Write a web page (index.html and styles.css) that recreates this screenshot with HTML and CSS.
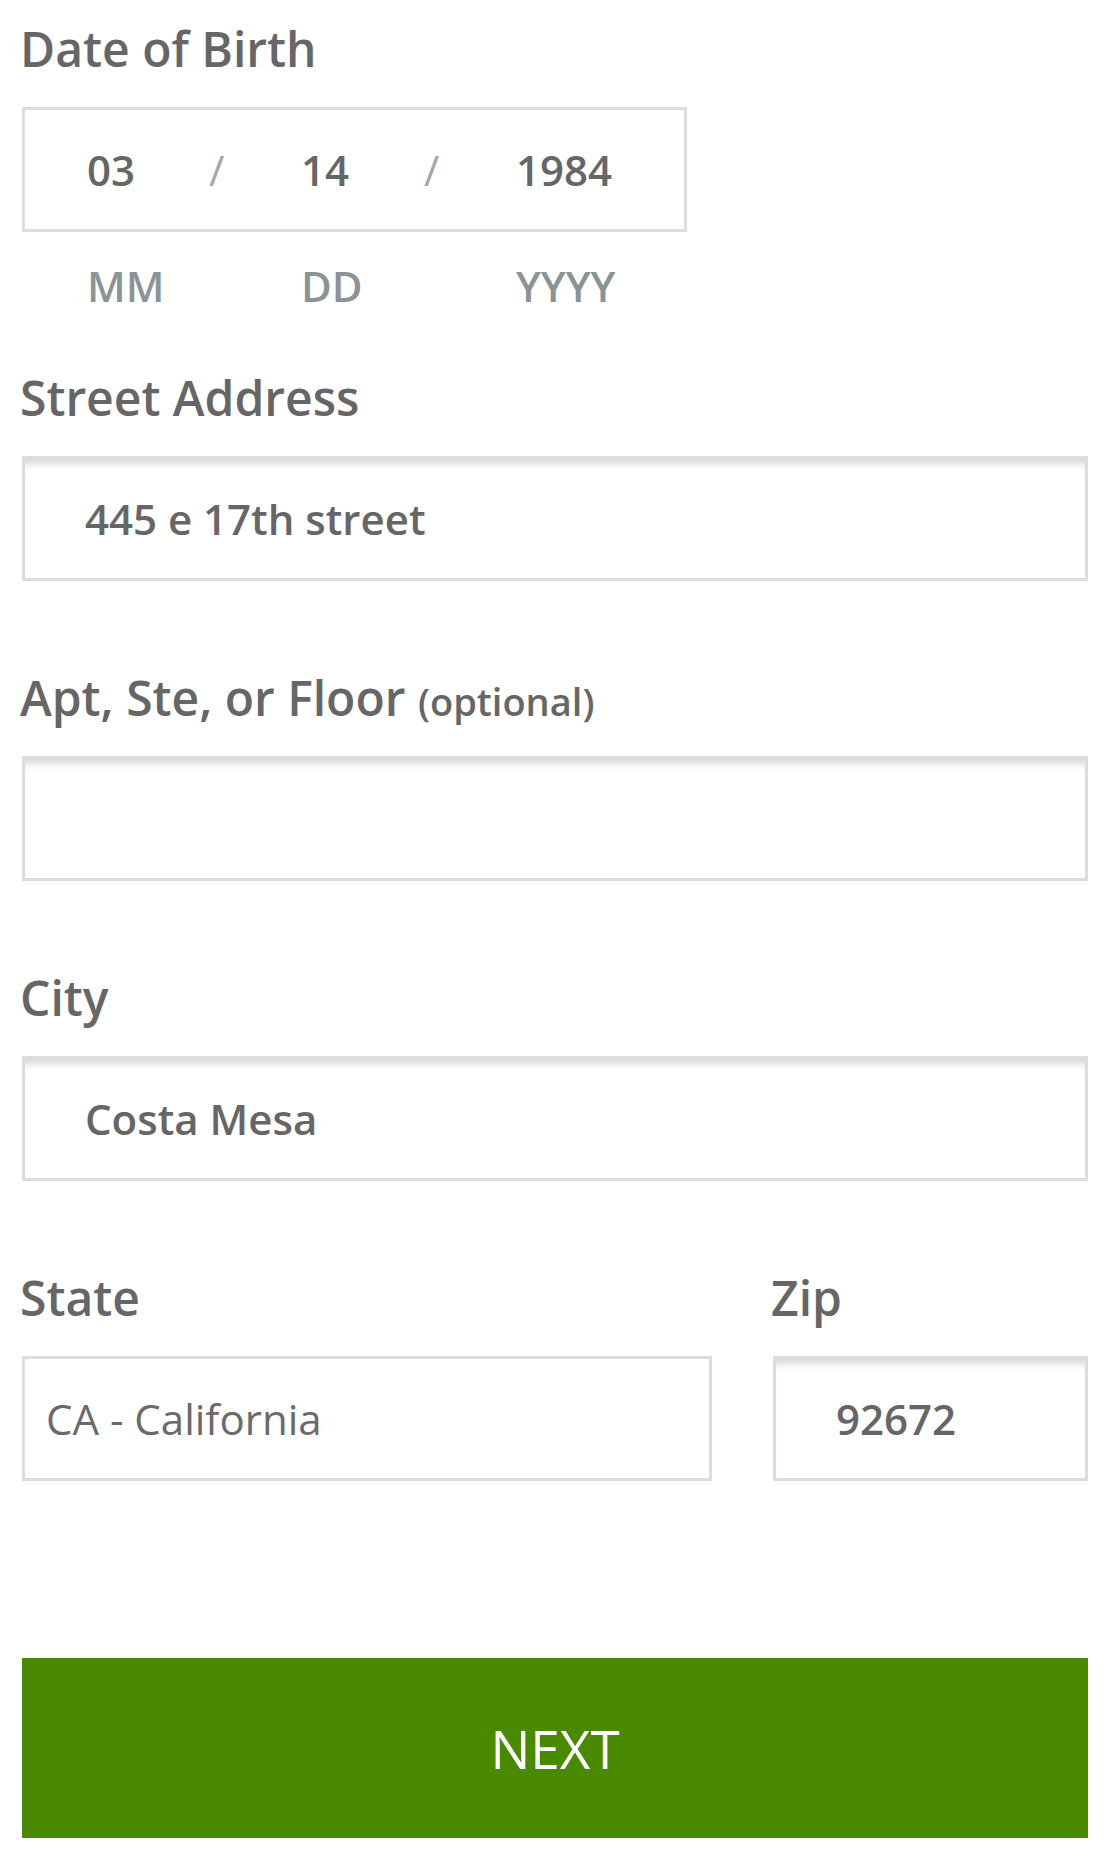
FILE: index.html
```html
<!DOCTYPE html>
<html lang="en">
<head>
<meta charset="utf-8">
<title>Address form</title>
<link rel="stylesheet" href="styles.css">
</head>
<body>
<form class="form">
  <div class="field field-dob">
    <div class="label">Date of Birth</div>
    <div class="dob-box">
      <span class="dob-val dob-mm">03</span>
      <span class="dob-sep">/</span>
      <span class="dob-val dob-dd">14</span>
      <span class="dob-sep">/</span>
      <span class="dob-val dob-yy">1984</span>
    </div>
    <div class="dob-hints">
      <span class="dob-hint dob-mm-h">MM</span>
      <span class="dob-hint dob-dd-h">DD</span>
      <span class="dob-hint">YYYY</span>
    </div>
  </div>

  <div class="field">
    <div class="label">Street Address</div>
    <div class="input">445 e 17th street</div>
  </div>

  <div class="field">
    <div class="label">Apt, Ste, or Floor <span class="optional">(optional)</span></div>
    <div class="input"></div>
  </div>

  <div class="field">
    <div class="label">City</div>
    <div class="input">Costa Mesa</div>
  </div>

  <div class="field-row">
    <div class="field">
      <div class="label">State</div>
      <div class="input select">CA - California</div>
    </div>
    <div class="field">
      <div class="label">Zip</div>
      <div class="input">92672</div>
    </div>
  </div>

  <div class="button">NEXT</div>
</form>
</body>
</html>
```

FILE: styles.css
```css
html, body {
  margin: 0;
  padding: 0;
  background: #ffffff;
}

body {
  font-family: "Open Sans", "Noto Sans", "Liberation Sans", sans-serif;
  color: #666666;
}

.form {
  display: flex;
  flex-direction: column;
  padding: 19px 30px 38px 22px;
}

.field {
  display: flex;
  flex-direction: column;
}

.field + .field,
.field + .field-row {
  margin-top: 87px;
}

.field-dob + .field {
  margin-top: 57px;
}

.label {
  font-size: 48px;
  line-height: 60px;
  font-weight: 600;
  color: #666666;
  margin: 0 0 28px -2px;
}

.optional {
  font-size: 38px;
  line-height: 1;
}

.dob-box {
  box-sizing: border-box;
  width: 665px;
  height: 125px;
  border: 3px solid #dddddd;
  display: flex;
  align-items: center;
  padding-left: 62px;
  font-size: 42px;
  font-weight: 600;
  color: #666666;
}

.dob-val {
  display: block;
}

.dob-mm { width: 122px; }
.dob-dd { width: 123px; }

.dob-sep {
  display: block;
  width: 92px;
  color: #a3a8aa;
  font-weight: 400;
}

.dob-hints {
  display: flex;
  margin-top: 29px;
  padding-left: 65px;
  font-size: 42px;
  line-height: 50px;
  font-weight: 600;
  color: #8c9396;
}

.dob-mm-h { width: 214px; }
.dob-dd-h { width: 215px; }

.input {
  box-sizing: border-box;
  height: 125px;
  border: 3px solid #dddddd;
  box-shadow: inset 0 10px 8px -6px rgba(0, 0, 0, 0.18);
  display: flex;
  align-items: center;
  padding-left: 60px;
  font-size: 42px;
  font-weight: 600;
  color: #666666;
}

.input.select {
  box-shadow: none;
  padding-left: 21px;
  font-weight: 400;
  color: #6a6a6a;
}

.field-row {
  display: grid;
  grid-template-columns: 690px 1fr;
  column-gap: 61px;
}

.field-row .field + .field {
  margin-top: 0;
}

.button {
  margin-top: 177px;
  height: 180px;
  background: #4a8a00;
  color: #ffffff;
  font-size: 53px;
  font-weight: 400;
  display: flex;
  align-items: center;
  justify-content: center;
}
```
